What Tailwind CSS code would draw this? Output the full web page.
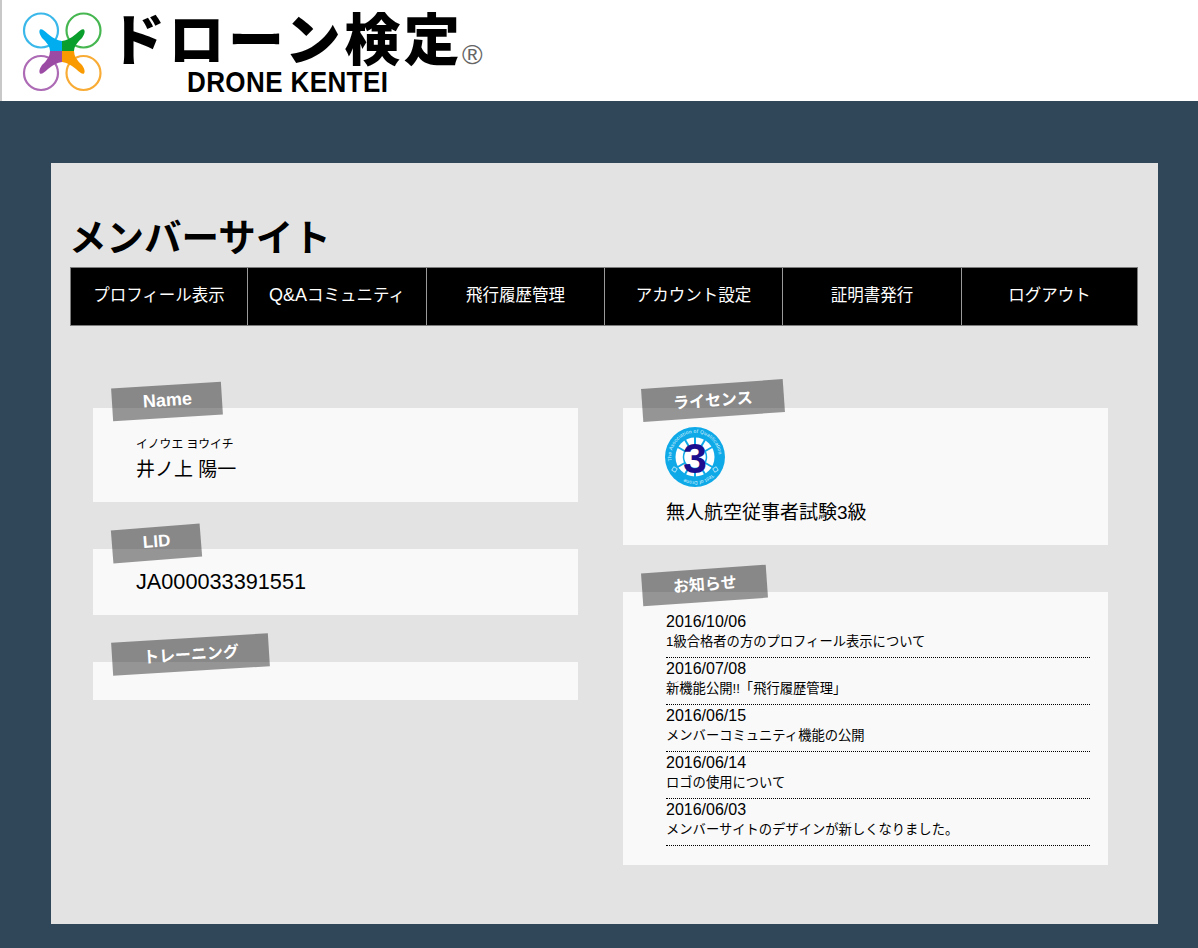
<!DOCTYPE html>
<html lang="ja">
  <head>
    <meta charset="UTF-8" />
    <title>メンバーサイト</title>
    <script src="https://cdn.jsdelivr.net/npm/@tailwindcss/browser@4"></script>
  </head>

  <body class="h-[948px] overflow-hidden bg-[#30475a] text-black font-['Liberation_Sans','Noto_Sans_CJK_JP',sans-serif]">
    <!-- Header -->
    <header class="relative flex h-[101px] items-start overflow-hidden border-l-2 border-[#c8c8c8] bg-white">
      <svg class="ml-[20px] mt-[12px] h-[80px] w-[80px] shrink-0" viewBox="22 12 80 80" aria-label="Drone Kentei logo">
        <g fill="none" stroke-width="2.2">
          <circle cx="41" cy="30.5" r="17" stroke="#3bb8ea" />
          <circle cx="83.5" cy="30.5" r="17" stroke="#46b750" />
          <circle cx="41" cy="73" r="17" stroke="#ad6ab5" />
          <circle cx="83.5" cy="73" r="17" stroke="#f9ac35" />
        </g>
        <path fill="#00aeef" d="M62 51 V41 Q55 40 48 34 Q42 28 40 29.500 Q38 32 42 38 Q50 45 50 51 Z" />
        <path fill="#0a9e2c" d="M62 51 V41 Q69 40 76 34 Q82 28 84 29.500 Q86 32 82 38 Q74 45 74 51 Z" />
        <path fill="#9c4ba5" d="M62 51 V62 Q55 63 48 69 Q42 75 40 73.500 Q38 71 42 65 Q50 58 50 51 Z" />
        <path fill="#f99a00" d="M62 51 V62 Q69 63 76 69 Q82 75 84 73.500 Q86 71 82 65 Q74 58 74 51 Z" />
      </svg>
      <div class="ml-[11px] mt-[6px] flex flex-col">
        <div class="flex h-[60px] items-start">
          <span class="ml-[-4px] w-[357px] whitespace-nowrap text-[56px] leading-[60px] font-black tracking-[3.5px] font-['Noto_Sans_CJK_JP',sans-serif]">ドローン検定</span>
          <span class="ml-[-4px] mt-[35px] text-[28px] leading-[28px] text-[#666] font-['Liberation_Sans',sans-serif]">®</span>
        </div>
        <span class="ml-[74px] mt-[2px] scale-y-[1.14] origin-top whitespace-nowrap text-[26px] leading-[24px] font-bold tracking-[0.4px] font-['Liberation_Sans',sans-serif]">DRONE KENTEI</span>
      </div>
    </header>

    <!-- Panel -->
    <main class="mx-[51px] mt-[62px] h-[761px] w-[1107px] bg-[#e3e3e3] px-[19px] pt-[50px]">
      <h1 class="ml-[-1px] h-[54px] text-[37.500px] leading-[50px] font-bold">メンバーサイト</h1>

      <nav class="grid h-[59px] w-[1068px] grid-cols-[176px_179px_178px_178px_179px_176px] border border-[#7c7c7c] bg-black text-[16.5px] text-white">
        <a class="flex items-center justify-center pb-[3px]">プロフィール表示</a>
        <a class="flex items-center justify-center border-l border-[#9a9a9a] pb-[3px]"><span class="text-[18px]">Q&amp;A</span>コミュニティ</a>
        <a class="flex items-center justify-center border-l border-[#9a9a9a] pb-[3px]">飛行履歴管理</a>
        <a class="flex items-center justify-center border-l border-[#9a9a9a] pb-[3px]">アカウント設定</a>
        <a class="flex items-center justify-center border-l border-[#9a9a9a] pb-[3px]">証明書発行</a>
        <a class="flex items-center justify-center border-l border-[#9a9a9a] pb-[3px]">ログアウト</a>
      </nav>

      <div class="mt-[82px] ml-[23px] flex gap-[45px]">
        <!-- Left column -->
        <div class="flex w-[485px] flex-col gap-[47px]">
          <section class="relative h-[94px] bg-[#f9f9f9] pl-[43px] pt-[28px]">
            <h2 class="absolute left-[19px] top-[-23px] flex h-[33px] w-[110px] rotate-[-3.5deg] items-center bg-black/40 pb-[3px] pl-[31px] text-[18px] font-bold text-white">Name</h2>
            <p class="text-[11.800px] leading-[16px]">イノウエ ヨウイチ</p>
            <p class="mt-[2px] text-[19px] leading-[32px]">井ノ上 陽一</p>
          </section>

          <section class="relative h-[66px] bg-[#f9f9f9] pl-[43px] pt-[17px]">
            <h2 class="absolute left-[19px] top-[-22px] flex h-[33px] w-[89px] rotate-[-4.5deg] items-center bg-black/40 pb-[3px] pl-[31px] text-[17px] font-bold text-white">LID</h2>
            <p class="text-[21.7px] leading-[32px]">JA000033391551</p>
          </section>

          <section class="relative h-[38px] bg-[#f9f9f9]">
            <h2 class="absolute left-[19px] top-[-24px] flex h-[33px] w-[157px] rotate-[-3.5deg] items-center bg-black/40 pl-[31px] text-[16px] font-bold text-white">トレーニング</h2>
          </section>
        </div>

        <!-- Right column -->
        <div class="flex w-[485px] flex-col gap-[47px]">
          <section class="relative h-[137px] bg-[#f9f9f9] pl-[42px] pt-[19px]">
            <h2 class="absolute left-[19px] top-[-24px] flex h-[33px] w-[142px] rotate-[-4deg] items-center bg-black/40 pl-[31px] text-[16px] font-bold text-white">ライセンス</h2>
            <svg class="h-[60px] w-[60px]" viewBox="0 0 60 60" aria-label="3級バッジ">
              <defs>
                <path id="badge-ring" d="M6.700 34 A23.700 23.700 0 1 1 53.700 30" />
                <path id="badge-ring-low" d="M47 47 A23.700 23.700 0 0 1 13 47" />
              </defs>
              <circle cx="30" cy="30" r="30" fill="#0fa9e8" />
              <circle cx="30" cy="30" r="19.500" fill="#fff" />
              <g stroke="#0fa9e8" stroke-width="2">
                <line x1="30" y1="10" x2="30" y2="50" />
                <line x1="20" y1="12.700" x2="40" y2="47.300" />
                <line x1="40" y1="12.700" x2="20" y2="47.300" />
                <line x1="12.700" y1="20" x2="47.300" y2="40" />
                <line x1="47.300" y1="20" x2="12.700" y2="40" />
              </g>
              <circle cx="30" cy="30" r="11.500" fill="#fff" stroke="#0fa9e8" stroke-width="1.500" />
              <text fill="#dff4fd" font-size="5" font-family="Liberation Sans">
                <textPath href="#badge-ring" textLength="76">The Association of Qualification</textPath>
              </text>
              <text fill="#dff4fd" font-size="5" font-family="Liberation Sans">
                <textPath href="#badge-ring-low" textLength="30">Test of Drone</textPath>
              </text>
              <g fill="none" stroke="#dff4fd" stroke-width=".7">
                <rect x="7.500" y="40.500" width="4" height="4" transform="rotate(-60 9.500 42.500)" />
                <rect x="48.500" y="40.500" width="4" height="4" transform="rotate(60 50.500 42.500)" />
              </g>
              <text x="30" y="45.500" text-anchor="middle" fill="#1c0f8f" font-size="43" font-weight="700" font-family="Liberation Sans">3</text>
            </svg>
            <p class="ml-[1px] mt-[11px] text-[19px] leading-[30px]">無人航空従事者試験3級</p>
          </section>

          <section class="relative h-[273px] bg-[#f9f9f9] pl-[43px] pr-[18px] pt-[19px]">
            <h2 class="absolute left-[19px] top-[-23px] flex h-[33px] w-[125px] rotate-[-4deg] items-center bg-black/40 pb-[2px] pl-[31px] text-[16px] font-bold text-white">お知らせ</h2>
            <ul>
              <li class="h-[47px] border-b border-dotted border-black">
                <p class="text-[16px] leading-[21px]">2016/10/06</p>
                <p class="text-[13.300px] leading-[20px]">1級合格者の方のプロフィール表示について</p>
              </li>
              <li class="h-[47px] border-b border-dotted border-black">
                <p class="text-[16px] leading-[21px]">2016/07/08</p>
                <p class="text-[13.300px] leading-[20px]">新機能公開!!「飛行履歴管理」</p>
              </li>
              <li class="h-[47px] border-b border-dotted border-black">
                <p class="text-[16px] leading-[21px]">2016/06/15</p>
                <p class="text-[13.300px] leading-[20px]">メンバーコミュニティ機能の公開</p>
              </li>
              <li class="h-[47px] border-b border-dotted border-black">
                <p class="text-[16px] leading-[21px]">2016/06/14</p>
                <p class="text-[13.300px] leading-[20px]">ロゴの使用について</p>
              </li>
              <li class="h-[47px] border-b border-dotted border-black">
                <p class="text-[16px] leading-[21px]">2016/06/03</p>
                <p class="text-[13.300px] leading-[20px]">メンバーサイトのデザインが新しくなりました。</p>
              </li>
            </ul>
          </section>
        </div>
      </div>
    </main>
  </body>
</html>
